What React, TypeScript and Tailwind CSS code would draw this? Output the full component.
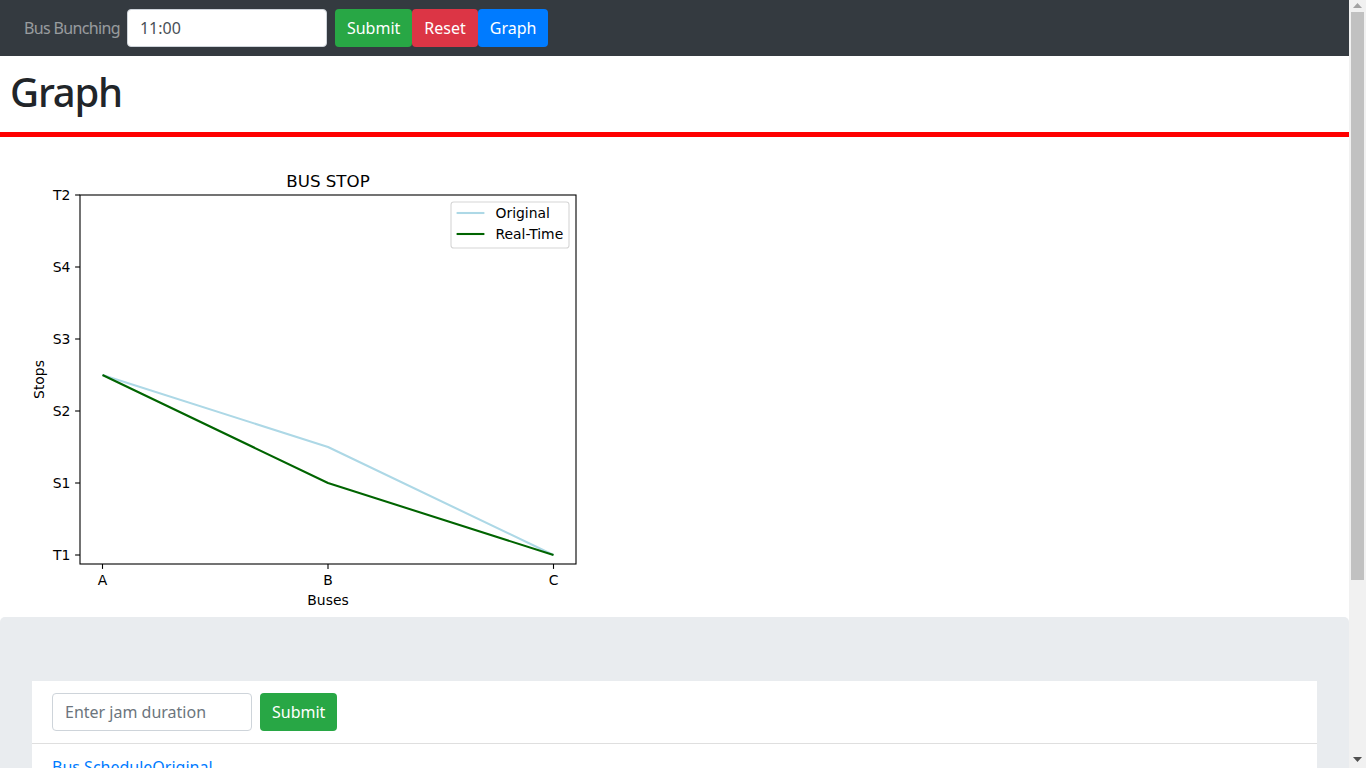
import React from 'react';

const xs = [102.5, 328, 553.5];
const yAt = (v: number) => 418 - v * 72;
const yTicks = ['T1', 'S1', 'S2', 'S3', 'S4', 'T2'];
const original = [2.5, 1.5, 0];
const realTime = [2.5, 1, 0];

const toPoints = (vals: number[]) => vals.map((v, i) => `${xs[i]},${yAt(v)}`).join(' ');

const BusStopChart: React.FC = () => (
  <svg width="640" height="480" viewBox="0 0 640 480" className="block" fontFamily="'DejaVu Sans', sans-serif">
    <rect x="0" y="0" width="640" height="480" fill="#ffffff" />
    <text x="328" y="49.7" fontSize="16.67" textAnchor="middle" fill="#000">BUS STOP</text>

    <polyline points={toPoints(original)} fill="none" stroke="#add8e6" strokeWidth="2.08" strokeLinejoin="round" />
    <polyline points={toPoints(realTime)} fill="none" stroke="#006400" strokeWidth="2.08" strokeLinejoin="round" />

    <rect x="80" y="58" width="496" height="369" fill="none" stroke="#000" strokeWidth="1.1" />

    {yTicks.map((t, i) => (
      <g key={t}>
        <line x1="80" x2="75.1" y1={yAt(i)} y2={yAt(i)} stroke="#000" strokeWidth="1.1" />
        <text x="70.3" y={yAt(i) + 5} fontSize="13.9" textAnchor="end" fill="#000">{t}</text>
      </g>
    ))}
    {['A', 'B', 'C'].map((t, i) => (
      <g key={t}>
        <line x1={xs[i]} x2={xs[i]} y1="427" y2="431.9" stroke="#000" strokeWidth="1.1" />
        <text x={xs[i]} y="447.5" fontSize="13.9" textAnchor="middle" fill="#000">{t}</text>
      </g>
    ))}
    <text x="328" y="467.5" fontSize="13.9" textAnchor="middle" fill="#000">Buses</text>
    <text transform="translate(44,242.5) rotate(-90)" fontSize="13.9" textAnchor="middle" fill="#000">Stops</text>

    <rect x="451" y="65" width="118" height="46" rx="2.8" fill="#ffffff" fillOpacity="0.8" stroke="#d6d6d6" strokeWidth="1.1" />
    <line x1="456.6" x2="484.4" y1="76" y2="76" stroke="#add8e6" strokeWidth="2.08" />
    <text x="495.5" y="81" fontSize="13.9" fill="#000">Original</text>
    <line x1="456.6" x2="484.4" y1="97" y2="97" stroke="#006400" strokeWidth="2.08" />
    <text x="495.5" y="102" fontSize="13.9" fill="#000">Real-Time</text>
  </svg>
);

// classic window scrollbar seen at the right edge of the screenshot
const ScrollBar: React.FC = () => (
  <aside className="w-[17px] shrink-0 bg-[#f1f1f1] flex flex-col items-center">
    <div className="h-[11px] w-full flex items-center justify-center">
      <svg width="9" height="5" viewBox="0 0 9 5"><path d="M4.5 0 L9 5 L0 5 Z" fill="#a3a3a3" /></svg>
    </div>
    <div className="flex-1 w-full px-[2px] flex flex-col">
      <div className="h-[568px] bg-[#c1c1c1] mt-[1px]" />
    </div>
    <div className="h-[17px] w-full flex items-center justify-center">
      <svg width="9" height="5" viewBox="0 0 9 5"><path d="M0 0 L9 0 L4.5 5 Z" fill="#505050" /></svg>
    </div>
  </aside>
);

const App: React.FC = () => {
  return (
    <div className="h-screen flex overflow-hidden bg-white text-[#212529] font-['Noto_Sans',sans-serif] text-base">
      <main className="flex-1 min-w-0 overflow-hidden">
        <nav className="h-14 bg-[#343a40] flex items-center px-4">
          <span className="pl-2 pr-[7px] text-white/50 leading-6 tracking-[-0.65px]">Bus Bunching</span>
          <input
            type="text"
            defaultValue="11:00"
            className="w-[200px] h-[38px] px-3 bg-white border border-[#ced4da] rounded text-[#495057] outline-none"
          />
          <button className="ml-2 h-[38px] px-3 bg-[#28a745] text-white rounded">Submit</button>
          <button className="h-[38px] px-3 bg-[#dc3545] text-white rounded">Reset</button>
          <button className="h-[38px] px-3 bg-[#007bff] text-white rounded">Graph</button>
        </nav>

        <h1 className="mt-3 px-[10px] text-[40px] leading-[48px] font-medium tracking-[-1.2px]">Graph</h1>
        <div className="mt-4 h-[5px] bg-[#ff0000]" />

        <BusStopChart />

        <section className="bg-[#e9ecef] rounded-t-[5px] px-8 pt-16 pb-16">
          <div className="bg-white">
            <div className="px-5 py-3 flex items-center border-b border-black/[0.125]">
              <input
                type="text"
                placeholder="Enter jam duration"
                className="w-[200px] h-[38px] px-3 bg-white border border-[#ced4da] rounded text-[#495057] placeholder:text-[#6c757d] outline-none"
              />
              <button className="ml-2 h-[38px] px-3 bg-[#28a745] text-white rounded">Submit</button>
            </div>
            <div className="px-5 pt-[11px] pb-5 min-h-[400px]">
              <a href="#" className="text-[#007bff] leading-6">Bus ScheduleOriginal</a>
            </div>
          </div>
        </section>
      </main>
      <ScrollBar />
    </div>
  );
};

export default App;
